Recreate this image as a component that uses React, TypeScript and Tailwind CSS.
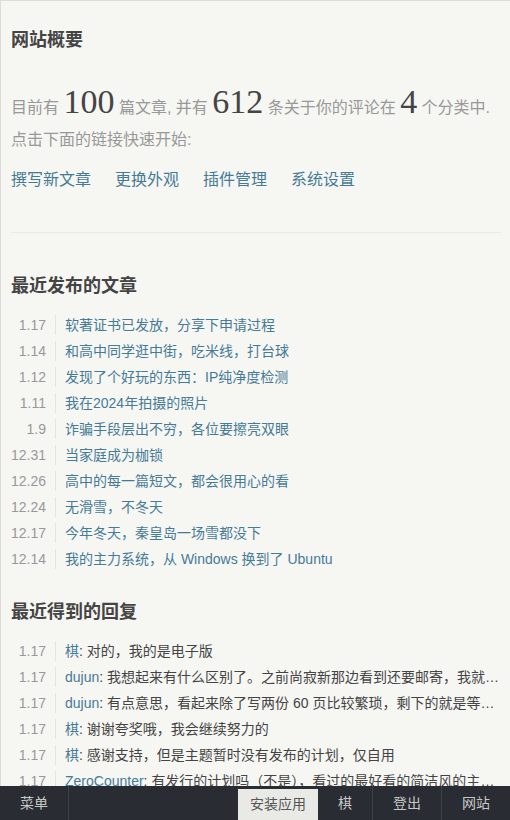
const font = { fontFamily: "'Liberation Sans','Noto Sans CJK SC',sans-serif" };
const numFont = { fontFamily: "'Liberation Serif',serif" };

const posts = [
  { date: '1.17', title: '软著证书已发放，分享下申请过程' },
  { date: '1.14', title: '和高中同学逛中街，吃米线，打台球' },
  { date: '1.12', title: '发现了个好玩的东西：IP纯净度检测' },
  { date: '1.11', title: '我在2024年拍摄的照片' },
  { date: '1.9', title: '诈骗手段层出不穷，各位要擦亮双眼' },
  { date: '12.31', title: '当家庭成为枷锁' },
  { date: '12.26', title: '高中的每一篇短文，都会很用心的看' },
  { date: '12.24', title: '无滑雪，不冬天' },
  { date: '12.17', title: '今年冬天，秦皇岛一场雪都没下' },
  { date: '12.14', title: '我的主力系统，从 Windows 换到了 Ubuntu' },
];

const replies = [
  { date: '1.17', author: '棋', text: '对的，我的是电子版' },
  { date: '1.17', author: 'dujun', text: '我想起来有什么区别了。之前尚寂新那边看到还要邮寄，我就以为是纸质版的证书了' },
  { date: '1.17', author: 'dujun', text: '有点意思，看起来除了写两份 60 页比较繁琐，剩下的就是等待审核了' },
  { date: '1.17', author: '棋', text: '谢谢夸奖哦，我会继续努力的' },
  { date: '1.17', author: '棋', text: '感谢支持，但是主题暂时没有发布的计划，仅自用' },
  { date: '1.17', author: 'ZeroCounter', text: '有发行的计划吗（不是），看过的最好看的简洁风的主题了' },
];

const DateCell = ({ date }: { date: string }) => (
  <span className="shrink-0 w-[45px] h-5 leading-5 pr-[9px] mr-[9px] text-right text-[#999] border-r border-[#e4e4e0]">{date}</span>
);

const Num = ({ children }: { children: React.ReactNode }) => (
  <em style={numFont} className="not-italic text-[#444] text-[34px] leading-4">{children}</em>
);

export default function App() {
  return (
    <div style={font} className="min-h-screen bg-[#f6f6f3] text-[#444] border-t border-l border-[#dcdcd8] pl-[10px] pr-[9px] pb-[60px]">
      <h3 className="mt-[28px] h-[22px] leading-[22px] text-[18px] font-bold">网站概要</h3>

      <p className="mt-[41px] text-[16px] leading-[32px] text-[#999]">
        目前有 <Num>100</Num> 篇文章, 并有 <Num>612</Num> 条关于你的评论在 <Num>4</Num> 个分类中.
        <br />
        点击下面的链接快速开始:
      </p>

      <div className="mt-[12px] flex gap-6 text-[16px] leading-6 text-[#467b96]">
        <a>撰写新文章</a>
        <a>更换外观</a>
        <a>插件管理</a>
        <a>系统设置</a>
      </div>

      <hr className="mt-[40px] border-0 border-t border-[#e9e9e6]" />

      <h3 className="mt-[42px] h-[22px] leading-[22px] text-[18px] font-bold">最近发布的文章</h3>
      <ul className="mt-[15px] text-[14px]">
        {posts.map((p, i) => (
          <li key={i} className="h-[26px] flex items-center">
            <DateCell date={p.date} />
            <a className="text-[#467b96] truncate">{p.title}</a>
          </li>
        ))}
      </ul>

      <h3 className="mt-[29px] h-[22px] leading-[22px] text-[18px] font-bold">最近得到的回复</h3>
      <ul className="mt-[15px] text-[14px]">
        {replies.map((r, i) => (
          <li key={i} className="h-[26px] flex items-center">
            <DateCell date={r.date} />
            <span className="truncate">
              <a className="text-[#467b96]">{r.author}</a>: {r.text}
            </span>
          </li>
        ))}
      </ul>

      <nav className="fixed bottom-0 left-0 right-0 h-[34px] bg-[#292d33] flex text-[14px] text-[#c8c8c8]">
        <a className="px-5 leading-[34px] border-r border-[#3b4047]">菜单</a>
        <div className="flex-1" />
        <a className="mt-[3px] px-3 leading-[31px] bg-[#e9e9e6] text-[#555]">安装应用</a>
        <a className="px-5 leading-[34px] border-r border-[#3b4047]">棋</a>
        <a className="px-5 leading-[34px] border-r border-[#3b4047]">登出</a>
        <a className="px-5 leading-[34px]">网站</a>
      </nav>
    </div>
  );
}
